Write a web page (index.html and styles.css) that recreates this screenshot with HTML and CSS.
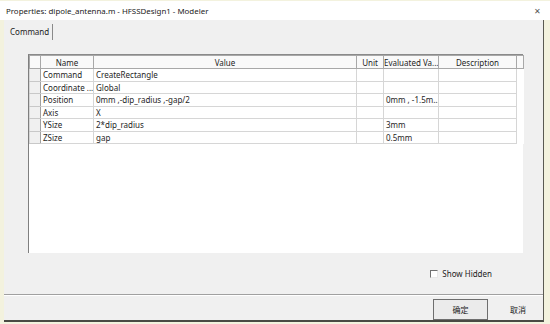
FILE: index.html
```html
<!DOCTYPE html>
<html lang="en">
<head>
  <meta charset="UTF-8">
  <title>Properties</title>
  <link rel="stylesheet" href="styles.css">
</head>
<body>
  <div class="window">
    <div class="titleBar">
      <span class="titleText">Properties: dipole_antenna.m - HFSSDesign1 - Modeler</span>
      <span class="closeBtn">&#x2715;</span>
    </div>
    <div class="frame">
      <div class="inner">
        <div class="tabBar">
          <div class="tab">Command</div>
        </div>

        <div class="gridBox">
          <table class="propGrid">
            <colgroup>
              <col class="cRow"><col class="cName"><col class="cValue"><col class="cUnit"><col class="cEval"><col class="cDesc"><col class="cPad">
            </colgroup>
            <thead>
              <tr>
                <th class="rowHead"></th>
                <th>Name</th>
                <th>Value</th>
                <th>Unit</th>
                <th>Evaluated Va...</th>
                <th>Description</th>
                <th class="padHead"></th>
              </tr>
            </thead>
            <tbody>
              <tr><td class="rowHead"></td><td>Command</td><td>CreateRectangle</td><td></td><td></td><td></td><td class="pad"></td></tr>
              <tr><td class="rowHead"></td><td>Coordinate ...</td><td>Global</td><td></td><td></td><td></td><td class="pad"></td></tr>
              <tr><td class="rowHead"></td><td>Position</td><td>0mm ,-dip_radius ,-gap/2</td><td></td><td>0mm , -1.5m...</td><td></td><td class="pad"></td></tr>
              <tr><td class="rowHead"></td><td>Axis</td><td>X</td><td></td><td></td><td></td><td class="pad"></td></tr>
              <tr><td class="rowHead"></td><td>YSize</td><td>2*dip_radius</td><td></td><td>3mm</td><td></td><td class="pad"></td></tr>
              <tr><td class="rowHead"></td><td>ZSize</td><td>gap</td><td></td><td>0.5mm</td><td></td><td class="pad"></td></tr>
            </tbody>
          </table>
        </div>

        <div class="optionRow">
          <label class="check"><span class="checkBox"></span>Show Hidden</label>
        </div>

        <div class="buttonRow">
          <button class="dlgBtn defaultBtn">确定</button>
          <button class="dlgBtn lastBtn">取消</button>
        </div>
      </div>
    </div>
  </div>
</body>
</html>
```

FILE: styles.css
```css
body {
  margin: 0;
  font-family: "Noto Sans", "Noto Sans CJK SC", sans-serif;
  font-size: 8px;
  color: #1e1e1e;
}
.window {
  width: 550px;
  height: 324px;
  display: flex;
  flex-direction: column;
  background-color: #f3f2de;
}
.titleBar {
  height: 20px;
  background-color: #fff;
  border-top: 1px solid #f3f2de;
  box-sizing: border-box;
  display: flex;
  align-items: center;
  justify-content: space-between;
  padding: 0 9px 0 6px;
}
.titleText {
  font-size: 7.9px;
  color: #222;
}
.closeBtn {
  font-size: 8px;
  color: #555;
}
.frame {
  flex: 1;
  display: flex;
  padding: 0 6px 2px 4px;
}
.inner {
  flex: 1;
  display: flex;
  flex-direction: column;
  background-color: #f0f0f0;
  border-right: 1px solid #5a5a52;
  border-bottom: 2px solid #4a4a44;
}
.tabBar {
  height: 34px;
  padding: 4px 0 0 4px;
  box-sizing: border-box;
}
.tab {
  display: inline-block;
  height: 16px;
  line-height: 16px;
  padding: 0 3px 0 2px;
  border-right: 1px solid #8a8a8a;
  color: #222;
}
.gridBox {
  margin-left: 24px;
  width: 495px;
  height: 199px;
  background-color: #fff;
  border-left: 1px solid #7f7f7f;
  border-top: 1px solid #8a8a8a;
  box-sizing: border-box;
}
.propGrid {
  border-collapse: collapse;
  table-layout: fixed;
  width: 494px;
}
.cRow { width: 11px; }
.cName { width: 53px; }
.cValue { width: 263px; }
.cUnit { width: 27px; }
.cEval { width: 55px; }
.cDesc { width: 78px; }
.cPad { width: 7px; }
.propGrid th {
  height: 12px;
  font-weight: normal;
  text-align: center;
  background-color: #f9f9f9;
  border: 1px solid #a8a8a8;
  padding: 0;
  white-space: nowrap;
  overflow: hidden;
}
.propGrid td {
  height: 11.5px;
  padding: 0 0 0 2px;
  border: 1px solid #d6d6d6;
  white-space: nowrap;
  overflow: hidden;
  line-height: 11px;
}
.propGrid td.rowHead {
  background-color: #f0f0f0;
  border-right: 1px solid #a0a0a0;
  border-bottom: 1px solid #c8c8c8;
}
.propGrid td.pad {
  border: none;
  background-color: #fff;
}
.optionRow {
  height: 42px;
  display: flex;
  justify-content: flex-end;
  align-items: center;
  padding-right: 51px;
  border-bottom: 1px solid #a0a0a0;
  box-shadow: 0 1px 0 #fff;
  box-sizing: border-box;
}
.check {
  display: flex;
  align-items: center;
  gap: 4px;
  color: #222;
}
.checkBox {
  width: 6px;
  height: 6px;
  border-left: 1px solid #707070;
  border-top: 1px solid #707070;
  border-right: 1px solid #e8e8e8;
  border-bottom: 1px solid #e8e8e8;
  background-color: #fff;
}
.buttonRow {
  flex: 1;
  display: flex;
  justify-content: flex-end;
  align-items: flex-end;
  gap: 5px;
  padding-top: 2px;
}
.dlgBtn {
  width: 55px;
  height: 21px;
  font-family: "Noto Sans CJK SC", sans-serif;
  font-size: 8px;
  color: #222;
  background-color: #f0f0f0;
  border: 1px solid #f0f0f0;
  padding: 0;
}
.lastBtn {
  width: 50px;
}
.defaultBtn {
  border: 1px solid #6e6e6e;
  background-color: #ebebeb;
}
```
